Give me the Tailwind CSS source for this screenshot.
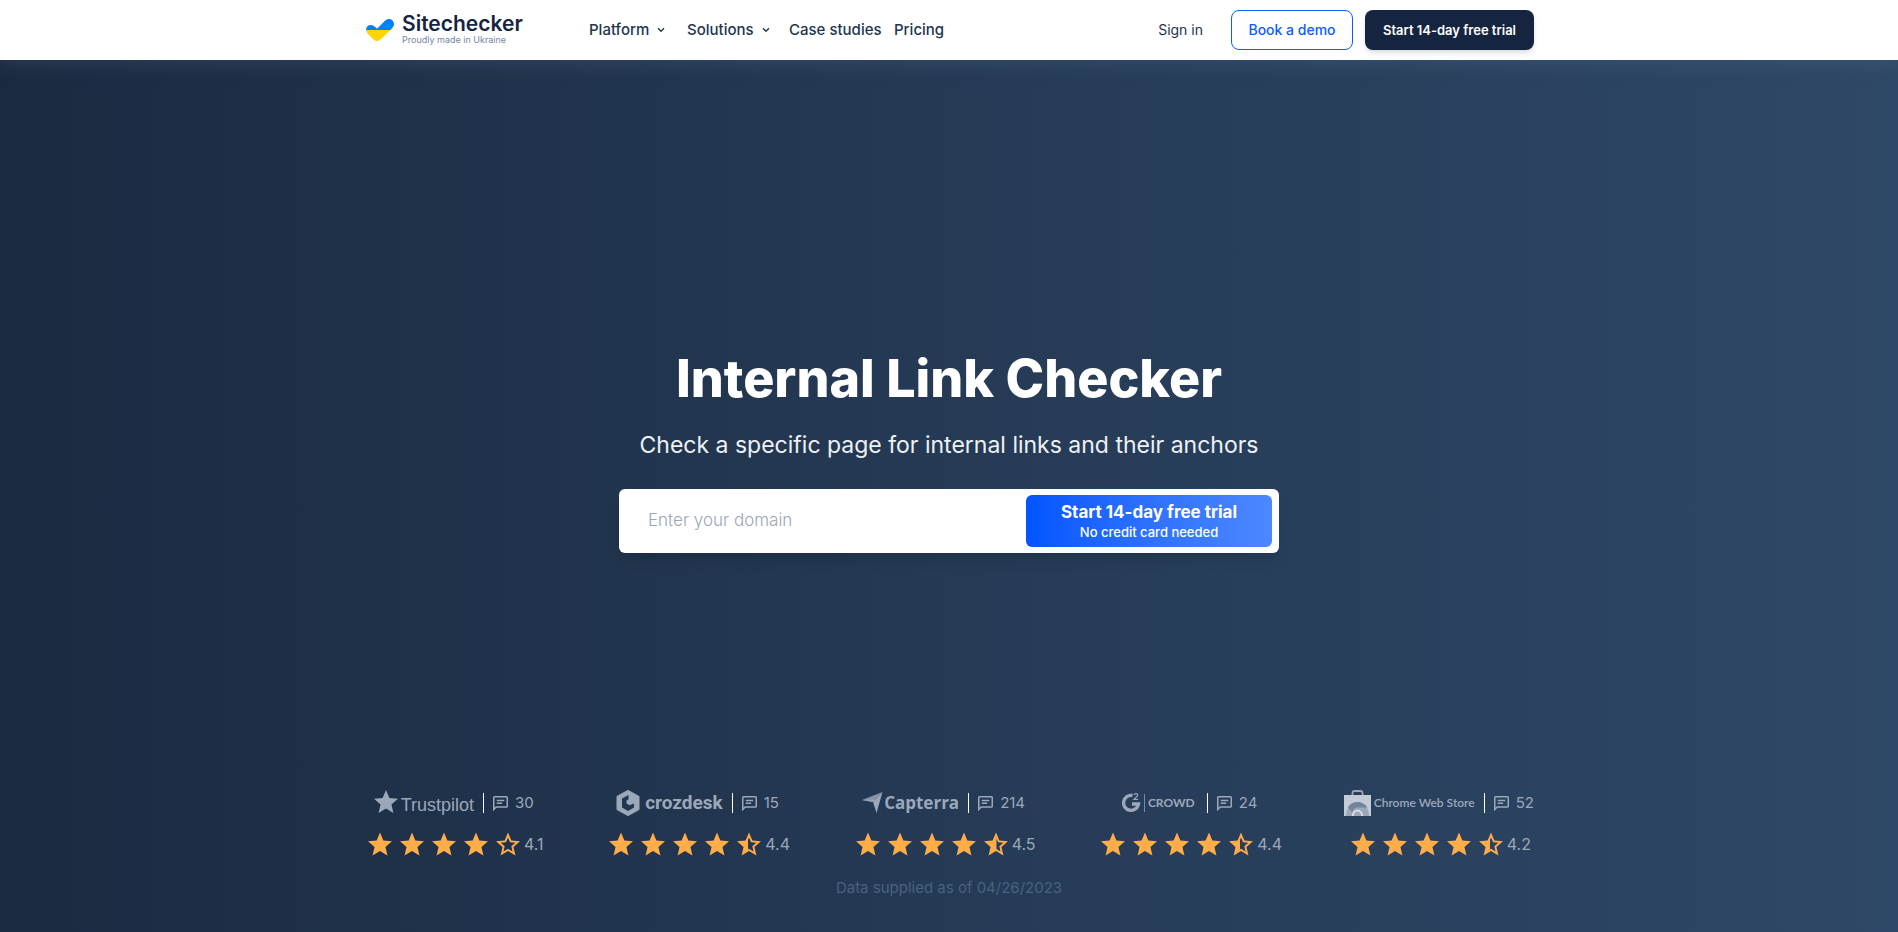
<!DOCTYPE html>
<html lang="en">
<head>
    <meta charset="UTF-8">
    <meta name="viewport" content="width=device-width, initial-scale=1.0">
    <title>Internal Link Checker - Sitechecker</title>
    <script src="https://cdn.jsdelivr.net/npm/@tailwindcss/browser@4"></script>
</head>
<body class="min-h-screen flex flex-col font-[Inter,sans-serif] text-[#22344f]">

    <!-- Icons shared by the review blocks -->
    <svg class="absolute w-0 h-0" aria-hidden="true">
        <defs>
            <path id="star-path" d="M12 17.27L18.18 21l-1.64-7.03L22 9.24l-7.19-.61L12 2 9.19 8.63 2 9.24l5.46 4.73L5.82 21z"/>
            <path id="star-outline-path" d="M22 9.24l-7.19-.62L12 2 9.19 8.63 2 9.24l5.46 4.73L5.82 21 12 17.27 18.18 21l-1.63-7.03L22 9.24zM12 15.4l-3.76 2.27 1-4.28-3.32-2.88 4.38-.38L12 6.1l1.71 4.04 4.38.38-3.32 2.88 1 4.28L12 15.4z"/>
        </defs>
        <symbol id="star" viewBox="2 2 20 19"><use href="#star-path"/></symbol>
        <symbol id="star-empty" viewBox="2 2 20 19"><use href="#star-outline-path"/></symbol>
        <symbol id="star-half" viewBox="2 2 20 19"><use href="#star-outline-path"/><path d="M12.400 5L9 9 4 10l4 4-1 5 5.400-3z"/></symbol>
        <symbol id="star-low" viewBox="2 2 20 19"><use href="#star-outline-path"/><path d="M11.200 6L9 9 4 10l4 4-1 5 4.200-3z"/></symbol>
        <symbol id="comment" viewBox="0 0 14 14">
            <path d="M.7 12.600V1.400q0-.7.7-.7h11.200q.7 0 .7.7v8.200q0 .7-.7.7H3z" fill="none" stroke="currentColor" stroke-width="1.400"/>
            <path d="M3.500 4.200h7M3.500 6.800h5" fill="none" stroke="currentColor" stroke-width="1.300"/>
        </symbol>
        <symbol id="chevron" viewBox="0 0 8 6"><path d="M1 1.200l3 3 3-3" fill="none" stroke="currentColor" stroke-width="1.400"/></symbol>
    </svg>

    <header class="relative z-10 h-[60px] bg-white shadow-[0_3px_20px_rgba(120,140,170,0.2)]">
        <div class="max-w-[1170px] h-full mx-auto flex items-center">
            <a href="#" class="w-[225px] flex items-center gap-2 pl-0.5">
                <svg class="w-7 h-[22px]" viewBox="0 0 28 22">
                    <path d="M0 11C0 8 2 6 4.500 6c2.500 0 4 1.200 6.500 3.800L19 1.800C21.500-.5 24.500-.3 26.300 1.200c2.200 2.300 2.200 5.200.3 7.300L24.500 11z" fill="#0080ff"/>
                    <path d="M0 11h24.500L14.500 20.500q-3.500 3-7 0L1.500 14.500Q0 12.800 0 11z" fill="#ffd500"/>
                </svg>
                <span class="flex flex-col">
                    <span class="text-[21px] leading-5 font-semibold text-[#15253f]">Sitechecker</span>
                    <span class="text-[9px] leading-3 text-[#7288a5]">Proudly made in Ukraine</span>
                </span>
            </a>
            <nav class="flex items-center text-[15px] font-medium">
                <a href="#" class="w-[98px] flex items-center gap-2">Platform <svg class="w-2 h-1.5"><use href="#chevron"/></svg></a>
                <a href="#" class="w-[102px] flex items-center gap-2">Solutions <svg class="w-2 h-1.5"><use href="#chevron"/></svg></a>
                <a href="#" class="w-[105px]">Case studies</a>
                <a href="#">Pricing</a>
            </nav>
            <div class="ml-auto flex items-center text-sm">
                <a href="#" class="mr-7">Sign in</a>
                <button class="w-[122px] h-10 mr-3 border border-[#0a5cff] rounded-lg text-[#0a5cff] font-medium">Book a demo</button>
                <button class="w-[169px] h-10 rounded-lg bg-[#15253f] text-white text-[13px] font-semibold shadow-md">Start 14-day free trial</button>
            </div>
        </div>
    </header>

    <main class="flex-1 flex flex-col bg-linear-to-r from-[#1b2a41] via-[#253a55] to-[#2e4867]">
        <section class="flex-1 flex flex-col items-center justify-center pt-[54px] text-center">
            <h1 class="text-[52px] leading-[60px] font-extrabold text-white">Internal Link Checker</h1>
            <p class="mt-5 text-[23px] leading-8 text-[#eef1f5]">Check a specific page for internal links and their anchors</p>
            <form class="mt-7 w-full max-w-[660px] h-16 p-1.5 pr-[7px] flex bg-white rounded-md shadow-lg">
                <input type="text" aria-label="Enter your domain" placeholder="Enter your domain" class="flex-1 px-[23px] text-[17px] font-light outline-none placeholder:text-[#9aa7b8]">
                <button type="button" class="w-[246px] pt-0.5 flex flex-col items-center justify-center rounded-md bg-linear-to-r from-[#0055ff] to-[#4d88ff] text-white">
                    <span class="text-[17px] leading-5 font-bold">Start 14-day free trial</span>
                    <span class="text-[13px] leading-5 font-medium">No credit card needed</span>
                </button>
            </form>
        </section>

        <section class="w-full max-w-[1170px] mx-auto pb-8 text-[#9ba8ba]">
            <div class="flex justify-between">
                <div class="flex flex-col items-center gap-3.5">
                    <a href="#" class="h-[30px] flex items-center">
                        <svg class="w-6 h-[23px] mr-[3px] mb-1" fill="currentColor"><use href="#star"/></svg>
                        <span class="font-['Liberation_Sans',sans-serif] text-lg leading-6 pt-1">Trustpilot</span>
                        <span class="w-px h-5 mx-[9px] bg-white"></span>
                        <svg class="w-[15px] h-[15px] mr-[7px]"><use href="#comment"/></svg>
                        <span class="text-[15px] leading-6">30</span>
                    </a>
                    <div class="h-6 flex items-center text-[#ffac4a]">
                        <svg class="w-6 h-6 mx-1" fill="currentColor"><use href="#star"/></svg>
                        <svg class="w-6 h-6 mx-1" fill="currentColor"><use href="#star"/></svg>
                        <svg class="w-6 h-6 mx-1" fill="currentColor"><use href="#star"/></svg>
                        <svg class="w-6 h-6 mx-1" fill="currentColor"><use href="#star"/></svg>
                        <svg class="w-6 h-6 mx-1" fill="currentColor"><use href="#star-empty"/></svg>
                        <span class="text-base leading-6 text-[#9ba8ba]">4.1</span>
                    </div>
                </div>

                <div class="flex flex-col items-center gap-3.5">
                    <a href="#" class="h-[30px] flex items-center">
                        <svg class="w-6 h-[26px] mr-[5px]" viewBox="0 0 24 26">
                            <path d="M12 1.500L22 7v12l-10 5.500L2 19V7z" fill="currentColor" stroke="currentColor" stroke-width="3" stroke-linejoin="round"/>
                            <path d="M12.500 5L6 8.500v9l6 3.500 6-3.500v-4l-4.500 1.800-3-1.800v-3l2-1z" fill="#23364f"/>
                        </svg>
                        <span class="font-[Roboto,sans-serif] text-[19px] leading-6 font-bold">crozdesk</span>
                        <span class="w-px h-5 mx-[9px] bg-white"></span>
                        <svg class="w-[15px] h-[15px] mr-[7px]"><use href="#comment"/></svg>
                        <span class="text-[15px] leading-6">15</span>
                    </a>
                    <div class="h-6 flex items-center text-[#ffac4a]">
                        <svg class="w-6 h-6 mx-1" fill="currentColor"><use href="#star"/></svg>
                        <svg class="w-6 h-6 mx-1" fill="currentColor"><use href="#star"/></svg>
                        <svg class="w-6 h-6 mx-1" fill="currentColor"><use href="#star"/></svg>
                        <svg class="w-6 h-6 mx-1" fill="currentColor"><use href="#star"/></svg>
                        <svg class="w-6 h-6 mx-1" fill="currentColor"><use href="#star-low"/></svg>
                        <span class="text-base leading-6 text-[#9ba8ba]">4.4</span>
                    </div>
                </div>

                <div class="flex flex-col items-center gap-3.5">
                    <a href="#" class="h-[30px] flex items-center">
                        <svg class="w-[21px] h-6 mr-px" viewBox="0 0 21 24">
                            <path d="M0 9L20.500 1 11 11z" fill="#8594aa"/>
                            <path d="M20.500 1L14.500 22 11 11z" fill="currentColor"/>
                            <path d="M0 9l11 2 2.500-2.500z" fill="currentColor"/>
                        </svg>
                        <span class="font-['Open_Sans',sans-serif] text-[17px] leading-6 font-bold">Capterra</span>
                        <span class="w-px h-5 mx-[9px] bg-white"></span>
                        <svg class="w-[15px] h-[15px] mr-[7px]"><use href="#comment"/></svg>
                        <span class="text-[15px] leading-6">214</span>
                    </a>
                    <div class="h-6 flex items-center text-[#ffac4a]">
                        <svg class="w-6 h-6 mx-1" fill="currentColor"><use href="#star"/></svg>
                        <svg class="w-6 h-6 mx-1" fill="currentColor"><use href="#star"/></svg>
                        <svg class="w-6 h-6 mx-1" fill="currentColor"><use href="#star"/></svg>
                        <svg class="w-6 h-6 mx-1" fill="currentColor"><use href="#star"/></svg>
                        <svg class="w-6 h-6 mx-1" fill="currentColor"><use href="#star-half"/></svg>
                        <span class="text-base leading-6 text-[#9ba8ba]">4.5</span>
                    </div>
                </div>

                <div class="flex flex-col items-center gap-3.5">
                    <a href="#" class="h-[30px] flex items-center">
                        <svg class="w-[19px] h-5" viewBox="0 0 19 20">
                            <path d="M10.500 2.500A7.500 7.500 0 1 0 16.500 11H10" fill="none" stroke="currentColor" stroke-width="3.400"/>
                            <path d="M12 2q.4-1.400 2-1.400 1.800 0 1.800 1.500 0 1-1.600 2.200L12 6.500h4.200" fill="none" stroke="currentColor" stroke-width="1.200"/>
                        </svg>
                        <span class="w-px h-[18px] mx-[3px] bg-[#7b8aa0]"></span>
                        <span class="font-[Lato,sans-serif] text-xs leading-5 font-bold">CROWD</span>
                        <span class="w-px h-5 ml-3 mr-[9px] bg-white"></span>
                        <svg class="w-[15px] h-[15px] mr-[7px]"><use href="#comment"/></svg>
                        <span class="text-[15px] leading-6">24</span>
                    </a>
                    <div class="h-6 flex items-center text-[#ffac4a]">
                        <svg class="w-6 h-6 mx-1" fill="currentColor"><use href="#star"/></svg>
                        <svg class="w-6 h-6 mx-1" fill="currentColor"><use href="#star"/></svg>
                        <svg class="w-6 h-6 mx-1" fill="currentColor"><use href="#star"/></svg>
                        <svg class="w-6 h-6 mx-1" fill="currentColor"><use href="#star"/></svg>
                        <svg class="w-6 h-6 mx-1" fill="currentColor"><use href="#star-low"/></svg>
                        <span class="text-base leading-6 text-[#9ba8ba]">4.4</span>
                    </div>
                </div>

                <div class="flex flex-col items-center gap-3.5">
                    <a href="#" class="h-[30px] flex items-center">
                        <svg class="w-[27px] h-[26px] mr-[3px]" viewBox="0 0 27 26">
                            <path d="M8.500 5V3q0-2 2-2h6q2 0 2 2v2" fill="none" stroke="#a3a5aa" stroke-width="1.800"/>
                            <path d="M0 5h27v21H0z" fill="#c3cbd7"/>
                            <path d="M2 26a11.500 14 0 0 1 23 0z" fill="#9ba8ba"/>
                            <path d="M4 17q3.500-5 9.500-5t10 5.500H13.500q-4 0-5.500 5z" fill="#74849c"/>
                            <path d="M8.800 26a4.700 5.500 0 1 1 9.400 0" fill="#9ba8ba" stroke="#e3e8ee" stroke-width="1.500"/>
                        </svg>
                        <span class="font-[Lato,sans-serif] text-xs leading-5 font-semibold">Chrome Web Store</span>
                        <span class="w-px h-5 mx-[9px] bg-white"></span>
                        <svg class="w-[15px] h-[15px] mr-[7px]"><use href="#comment"/></svg>
                        <span class="text-[15px] leading-6">52</span>
                    </a>
                    <div class="h-6 flex items-center text-[#ffac4a]">
                        <svg class="w-6 h-6 mx-1" fill="currentColor"><use href="#star"/></svg>
                        <svg class="w-6 h-6 mx-1" fill="currentColor"><use href="#star"/></svg>
                        <svg class="w-6 h-6 mx-1" fill="currentColor"><use href="#star"/></svg>
                        <svg class="w-6 h-6 mx-1" fill="currentColor"><use href="#star"/></svg>
                        <svg class="w-6 h-6 mx-1" fill="currentColor"><use href="#star-low"/></svg>
                        <span class="text-base leading-6 text-[#9ba8ba]">4.2</span>
                    </div>
                </div>
            </div>
            <p class="mt-5 text-center text-[15px] leading-6 text-[#4a6180]">Data supplied as of 04/26/2023</p>
        </section>
    </main>
</body>
</html>
